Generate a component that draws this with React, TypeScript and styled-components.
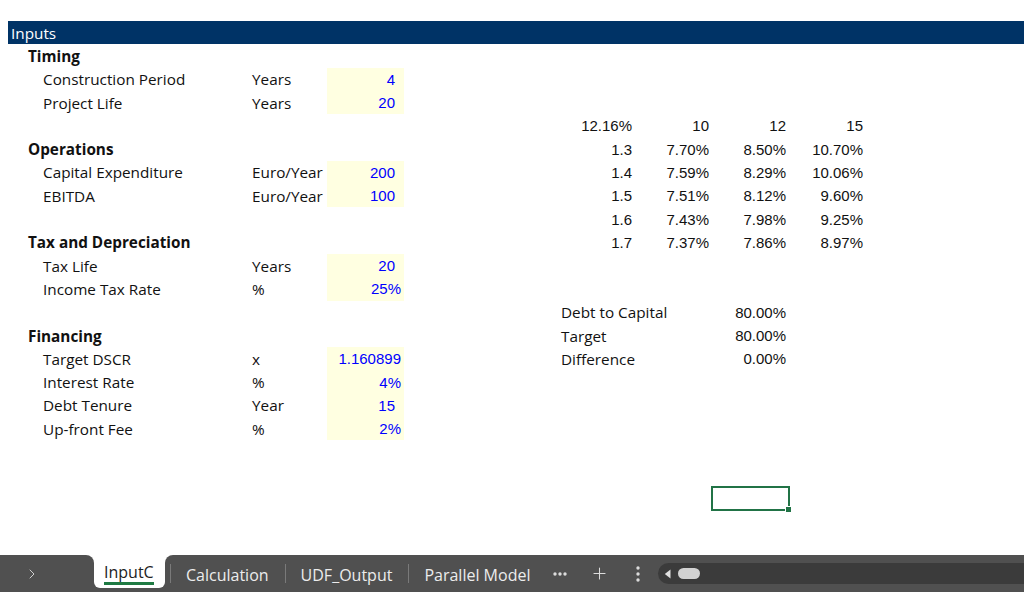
import React from "react";
import styled, { createGlobalStyle } from "styled-components";
import { ChevronRight, Plus } from "lucide-react";

const LABEL_FONT = `"Open Sans", "Liberation Sans", sans-serif`;
const NUM_FONT = `"Liberation Sans", Arial, sans-serif`;
const COLS = "17px 15px 209px 78px 77px repeat(10, 77px)";
const ROW_H = "23.3px";

const Global = createGlobalStyle`
  html, body {
    margin: 0;
    padding: 0;
    background: #ffffff;
    overflow: hidden;
  }
`;

/**
 * Styled
 */
const Page = styled.div`
  width: 1024px;
  height: 592px;
  display: flex;
  flex-direction: column;
  overflow: hidden;
`;

const Sheet = styled.div`
  flex: 1;
  padding: 21px 0 0 8px;
  overflow: hidden;
`;

const Row = styled.div<{ $header?: boolean }>`
  display: grid;
  grid-template-columns: ${COLS};
  height: ${ROW_H};
  background: ${(p) => (p.$header ? "#003366" : "transparent")};
`;

const Cell = styled.div<{
  $col: number;
  $span?: number;
  $right?: boolean;
  $bold?: boolean;
  $num?: boolean;
  $input?: boolean;
  $pad?: number;
  $white?: boolean;
  $selected?: boolean;
}>`
  position: relative;
  grid-column: ${(p) => p.$col} / span ${(p) => p.$span ?? 1};
  display: flex;
  align-items: center;
  justify-content: ${(p) => (p.$right ? "flex-end" : "flex-start")};
  padding: 0 ${(p) => p.$pad ?? 3}px 0 3px;
  white-space: nowrap;
  font-family: ${(p) => (p.$num || p.$input ? NUM_FONT : LABEL_FONT)};
  font-size: ${(p) => (p.$num || p.$input ? "15px" : "15.3px")};
  font-weight: ${(p) => (p.$bold ? 700 : 400)};
  color: ${(p) => (p.$white ? "#ffffff" : p.$input ? "#0000ff" : "#111111")};
  background: ${(p) => (p.$input ? "#ffffe1" : "transparent")};

  ${(p) =>
    p.$selected &&
    `
    &::after {
      content: "";
      position: absolute;
      inset: -1px -1px -1px -1px;
      border: 2px solid #217346;
    }
    &::before {
      content: "";
      position: absolute;
      right: -3px;
      bottom: -3px;
      width: 5px;
      height: 5px;
      background: #217346;
      border: 1px solid #ffffff;
      z-index: 1;
    }
  `}
`;

const TabBar = styled.div`
  height: 37px;
  display: flex;
  background: #ffffff;
  font-family: ${LABEL_FONT};
  font-size: 16px;
`;

const NavBlock = styled.div`
  width: 94px;
  background: #505050;
  border-top-right-radius: 8px;
  display: flex;
  align-items: center;
  padding-left: 24px;
  box-sizing: border-box;
  color: #cfcfcf;
`;

const ActiveSlot = styled.div`
  width: 71px;
  background: #505050;
  display: flex;
  flex-direction: column;
`;

const ActiveTab = styled.div`
  height: 33px;
  background: #ffffff;
  border-bottom-left-radius: 6px;
  border-bottom-right-radius: 6px;
  display: flex;
  align-items: center;
  padding-left: 10px;
  color: #222222;
`;

const ActiveLabel = styled.span`
  line-height: 20px;
  padding-top: 3px;
  border-bottom: 3px solid #1f7a43;
`;

const Strip = styled.div`
  flex: 1;
  background: #505050;
  border-top-left-radius: 8px;
  display: flex;
  align-items: center;
  padding-left: 5px;
  color: #ececec;
`;

const Sep = styled.div`
  width: 1px;
  height: 19px;
  background: #7a7a7a;
`;

const Tab = styled.div`
  padding: 2px 16px 0 15px;
  line-height: 22px;
`;

const IconBtn = styled.div`
  width: 24px;
  height: 24px;
  display: flex;
  align-items: center;
  justify-content: center;
  margin-right: 15px;
  color: #dcdcdc;
`;

const Tools = styled.div`
  display: flex;
  align-items: center;
  margin-left: 2px;
`;

const ScrollTrack = styled.div`
  flex: 1;
  height: 21px;
  margin-left: -7px;
  background: #3b3b3b;
  border-radius: 11px 0 0 11px;
  display: flex;
  align-items: center;
  padding-left: 6px;
  gap: 7px;
`;

const Thumb = styled.div`
  width: 22px;
  height: 11px;
  border-radius: 6px;
  background: #d2d2d2;
`;

interface LineI {
  label: string;
  unit: string;
  value: string;
  pad?: number;
}

interface SectionI {
  title: string;
  lines: LineI[];
}

const sections: SectionI[] = [
  {
    title: "Timing",
    lines: [
      { label: "Construction Period", unit: "Years", value: "4", pad: 9 },
      { label: "Project Life", unit: "Years", value: "20", pad: 9 },
    ],
  },
  {
    title: "Operations",
    lines: [
      { label: "Capital Expenditure", unit: "Euro/Year", value: "200", pad: 9 },
      { label: "EBITDA", unit: "Euro/Year", value: "100", pad: 9 },
    ],
  },
  {
    title: "Tax and Depreciation",
    lines: [
      { label: "Tax Life", unit: "Years", value: "20", pad: 9 },
      { label: "Income Tax Rate", unit: "%", value: "25%" },
    ],
  },
  {
    title: "Financing",
    lines: [
      { label: "Target DSCR", unit: "x", value: "1.160899" },
      { label: "Interest Rate", unit: "%", value: "4%" },
      { label: "Debt Tenure", unit: "Year", value: "15", pad: 9 },
      { label: "Up-front Fee", unit: "%", value: "2%" },
    ],
  },
];

// sensitivity grid sits on the right, rows 4..9
const sensitivity: string[][] = [
  ["12.16%", "10", "12", "15"],
  ["1.3", "7.70%", "8.50%", "10.70%"],
  ["1.4", "7.59%", "8.29%", "10.06%"],
  ["1.5", "7.51%", "8.12%", "9.60%"],
  ["1.6", "7.43%", "7.98%", "9.25%"],
  ["1.7", "7.37%", "7.86%", "8.97%"],
];

const checks: string[][] = [
  ["Debt to Capital", "80.00%"],
  ["Target", "80.00%"],
  ["Difference", "0.00%"],
];

type RightCell = React.ReactNode[];

function buildRight(): Record<number, RightCell> {
  const out: Record<number, RightCell> = {};
  sensitivity.forEach((r, i) => {
    out[4 + i] = r.map((v, j) => (
      <Cell key={`s${j}`} $col={8 + j} $right $num>
        {v}
      </Cell>
    ));
  });
  checks.forEach(([label, v], i) => {
    out[12 + i] = [
      <Cell key="l" $col={8} $span={2}>
        {label}
      </Cell>,
      <Cell key="v" $col={10} $right $num>
        {v}
      </Cell>,
    ];
  });
  out[20] = [<Cell key="sel" $col={10} $selected />];
  return out;
}

export default function App() {
  const right = buildRight();
  const left: React.ReactNode[][] = [];

  sections.forEach((s, si) => {
    left.push([
      <Cell key="t" $col={2} $span={3} $bold>
        {s.title}
      </Cell>,
    ]);
    s.lines.forEach((l) => {
      left.push([
        <Cell key="l" $col={3}>
          {l.label}
        </Cell>,
        <Cell key="u" $col={4}>
          {l.unit}
        </Cell>,
        <Cell key="v" $col={5} $right $input $pad={l.pad}>
          {l.value}
        </Cell>,
      ]);
    });
    if (si < sections.length - 1) left.push([]);
  });

  const rows: React.ReactNode[] = [];
  for (let r = 1; r <= 21; r++) {
    const cells = [...(left[r - 1] ?? []), ...(right[r] ?? [])];
    rows.push(<Row key={r}>{cells}</Row>);
  }

  return (
    <Page>
      <Global />
      <Sheet>
        <Row $header>
          <Cell $col={1} $span={4} $white>
            Inputs
          </Cell>
        </Row>
        {rows}
      </Sheet>
      <TabBar>
        <NavBlock>
          <ChevronRight size={16} strokeWidth={1.5} />
        </NavBlock>
        <ActiveSlot>
          <ActiveTab>
            <ActiveLabel>InputC</ActiveLabel>
          </ActiveTab>
        </ActiveSlot>
        <Strip>
          <Sep />
          <Tab>Calculation</Tab>
          <Sep />
          <Tab>UDF_Output</Tab>
          <Sep />
          <Tab>Parallel Model</Tab>
          <Tools>
            <IconBtn>
              <svg width="14" height="4" viewBox="0 0 14 4">
                <circle cx="2" cy="2" r="1.7" fill="currentColor" />
                <circle cx="7" cy="2" r="1.7" fill="currentColor" />
                <circle cx="12" cy="2" r="1.7" fill="currentColor" />
              </svg>
            </IconBtn>
            <IconBtn>
              <Plus size={19} strokeWidth={1.3} />
            </IconBtn>
            <IconBtn>
              <svg width="4" height="16" viewBox="0 0 4 16">
                <circle cx="2" cy="2" r="1.7" fill="currentColor" />
                <circle cx="2" cy="8" r="1.7" fill="currentColor" />
                <circle cx="2" cy="14" r="1.7" fill="currentColor" />
              </svg>
            </IconBtn>
          </Tools>
          <ScrollTrack>
            <svg width="7" height="10" viewBox="0 0 7 10">
              <path d="M6.5 0.5 L0.8 5 L6.5 9.5 Z" fill="#e0e0e0" />
            </svg>
            <Thumb />
          </ScrollTrack>
        </Strip>
      </TabBar>
    </Page>
  );
}
